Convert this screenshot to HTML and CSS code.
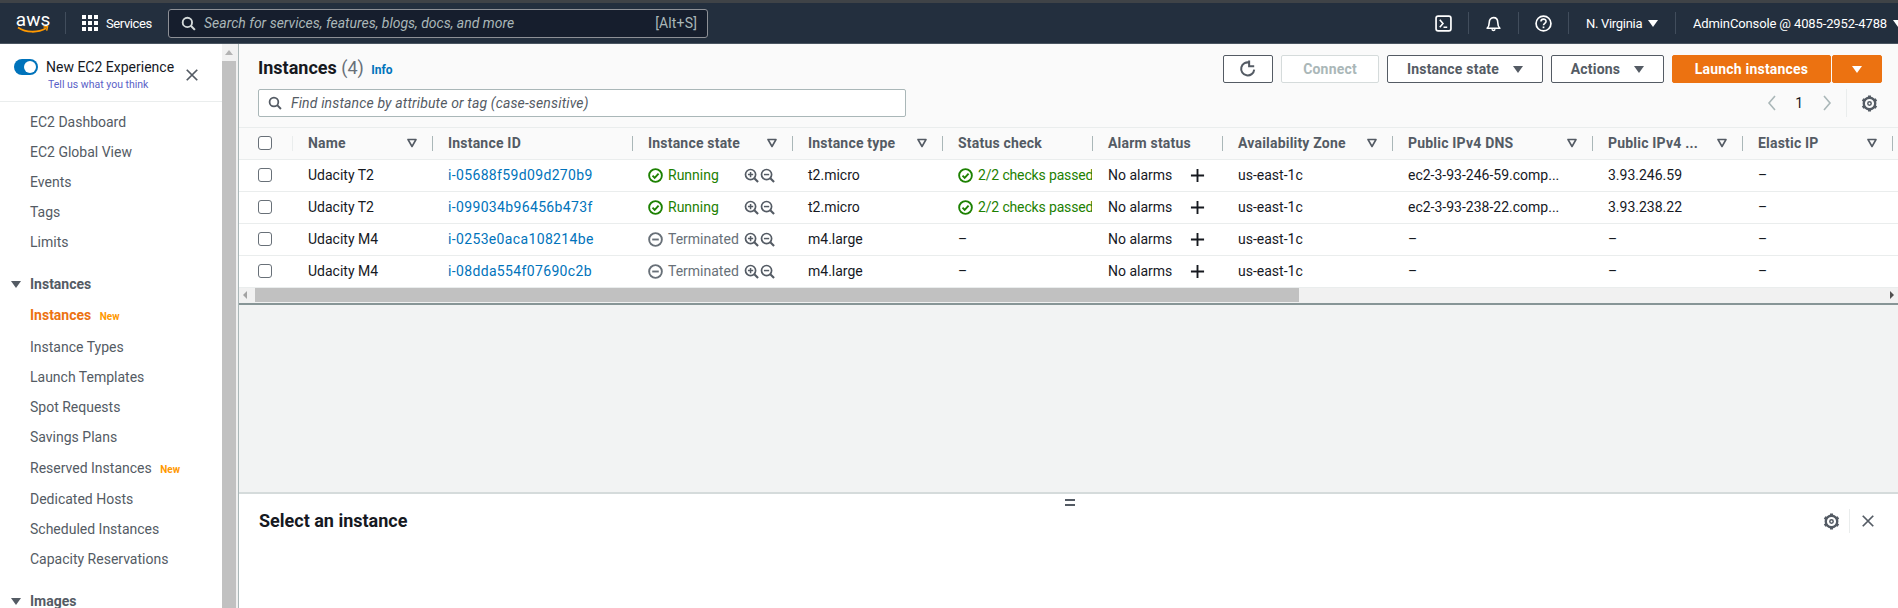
FILE: index.html
```html
<!DOCTYPE html>
<html lang="en">
<head>
  <meta charset="UTF-8">
  <title>Instances | EC2 Management Console</title>
  <link rel="stylesheet" href="styles.css">
</head>
<body>

<svg class="defs" width="0" height="0">
  <symbol id="gear" viewBox="0 0 16 16">
    <circle cx="8" cy="8" r="5.4" fill="none" stroke="currentColor" stroke-width="2.2"/>
    <circle cx="8" cy="8" r="1.6" fill="none" stroke="currentColor" stroke-width="1.4"/>
    <path d="M8 .5v2.500M8 13v2.500M1.500 4.200l2.200 1.300M12.300 10.500l2.200 1.300M1.500 11.800l2.200-1.300M12.300 5.500l2.200-1.300" stroke="currentColor" stroke-width="2.800"/>
  </symbol>
  <symbol id="funnel" viewBox="0 0 10 10">
    <path d="M1 1.5h8L5 8.5z" fill="none" stroke="currentColor" stroke-width="1.6" stroke-linejoin="round"/>
  </symbol>
  <symbol id="ok" viewBox="0 0 16 16">
    <circle cx="8" cy="8" r="6.8" fill="none" stroke="currentColor" stroke-width="2"/>
    <path d="M4.8 8.2l2.3 2.3 4.2-4.6" fill="none" stroke="currentColor" stroke-width="2"/>
  </symbol>
  <symbol id="stopped" viewBox="0 0 16 16">
    <circle cx="8" cy="8" r="6.8" fill="none" stroke="currentColor" stroke-width="2"/>
    <path d="M4.5 8h7" stroke="currentColor" stroke-width="2"/>
  </symbol>
  <symbol id="zoomin" viewBox="0 0 16 16">
    <circle cx="7" cy="7" r="5.4" fill="none" stroke="currentColor" stroke-width="1.8"/>
    <path d="M11 11l4 4" stroke="currentColor" stroke-width="2.2"/>
    <path d="M4.2 7h5.6M7 4.2v5.6" stroke="currentColor" stroke-width="1.6"/>
  </symbol>
  <symbol id="zoomout" viewBox="0 0 16 16">
    <circle cx="7" cy="7" r="5.4" fill="none" stroke="currentColor" stroke-width="1.8"/>
    <path d="M11 11l4 4" stroke="currentColor" stroke-width="2.2"/>
    <path d="M4.2 7h5.6" stroke="currentColor" stroke-width="1.6"/>
  </symbol>
  <symbol id="plus" viewBox="0 0 16 16">
    <path d="M8 1v14M1 8h14" stroke="currentColor" stroke-width="2"/>
  </symbol>
  <symbol id="cross" viewBox="0 0 16 16">
    <path d="M2 2l12 12M14 2L2 14" stroke="currentColor" stroke-width="2"/>
  </symbol>
  <symbol id="search" viewBox="0 0 16 16">
    <circle cx="6.8" cy="6.8" r="5" fill="none" stroke="currentColor" stroke-width="2"/>
    <path d="M10.5 10.5l4.3 4.3" stroke="currentColor" stroke-width="2.2"/>
  </symbol>
</svg>

<div class="topline"></div>

<header class="navbar">
  <div class="aws-logo">
    <span class="aws-word">aws</span>
    <svg class="aws-smile" viewBox="0 0 32 8" width="32" height="8">
      <path d="M1 1.5c8 5.500 20 5.500 28 .8" fill="none" stroke="#f90" stroke-width="1.8"/>
      <path d="M26.500 1l4-.4-.8 4" fill="none" stroke="#f90" stroke-width="1.5"/>
    </svg>
  </div>
  <span class="nav-sep nav-sep-logo"></span>
  <svg class="grid-icon" viewBox="0 0 16 16" width="16" height="16" fill="#fff">
    <rect width="4" height="4"/><rect x="6" width="4" height="4"/><rect x="12" width="4" height="4"/>
    <rect y="6" width="4" height="4"/><rect x="6" y="6" width="4" height="4"/><rect x="12" y="6" width="4" height="4"/>
    <rect y="12" width="4" height="4"/><rect x="6" y="12" width="4" height="4"/><rect x="12" y="12" width="4" height="4"/>
  </svg>
  <span class="services">Services</span>
  <div class="nav-search">
    <svg width="15" height="15"><use href="#search"/></svg>
    <span class="nav-search-text">Search for services, features, blogs, docs, and more</span>
    <span class="nav-search-key">[Alt+S]</span>
  </div>
  <div class="nav-right">
    <svg class="nav-icon" viewBox="0 0 16 16" width="17" height="17">
      <rect x="1" y="1" width="14" height="14" rx="2" fill="none" stroke="#fff" stroke-width="1.6"/>
      <path d="M4.5 4.5L7.5 8l-3 3.5M8 11.5h3.5" fill="none" stroke="#fff" stroke-width="1.5"/>
    </svg>
    <span class="nav-sep"></span>
    <svg class="nav-icon" viewBox="0 0 16 16" width="17" height="17">
      <path d="M2 12.5c1.500-1.500 2-2.500 2-5.500 0-2.600 1.600-4.500 4-4.500s4 1.900 4 4.500c0 3 .5 4 2 5.500z" fill="none" stroke="#fff" stroke-width="1.5" stroke-linejoin="round"/>
      <path d="M6.500 13.500a1.600 1.600 0 0 0 3 0" fill="none" stroke="#fff" stroke-width="1.5"/>
    </svg>
    <span class="nav-sep"></span>
    <svg class="nav-icon" viewBox="0 0 16 16" width="17" height="17">
      <circle cx="8" cy="8" r="7" fill="none" stroke="#fff" stroke-width="1.6"/>
      <path d="M5.600 6.200c0-3 4.800-3 4.800-.2 0 1.800-2.400 1.800-2.400 3.600" fill="none" stroke="#fff" stroke-width="1.5"/>
      <rect x="7.200" y="10.800" width="1.600" height="1.600" fill="#fff"/>
    </svg>
    <span class="nav-sep"></span>
    <span class="nav-menu nav-region">N. Virginia <i class="caret-white"></i></span>
    <span class="nav-sep"></span>
    <span class="nav-menu nav-account">AdminConsole @ 4085-2952-4788 <i class="caret-white"></i></span>
  </div>
</header>

<div class="content">
  <nav class="sidebar">
    <div class="experience">
      <div class="experience-row">
        <span class="toggle"><span class="toggle-knob"></span></span>
        <span class="experience-title">New EC2 Experience</span>
        <svg class="experience-close" width="14" height="14"><use href="#cross"/></svg>
      </div>
      <a class="experience-link">Tell us what you think</a>
    </div>
    <ul class="side-list side-list-top">
      <li>EC2 Dashboard</li>
      <li>EC2 Global View</li>
      <li>Events</li>
      <li>Tags</li>
      <li>Limits</li>
    </ul>
    <div class="side-head"><i class="caret-dark"></i>Instances</div>
    <ul class="side-list">
      <li class="side-new side-active">Instances <span class="new-tag">New</span></li>
      <li>Instance Types</li>
      <li>Launch Templates</li>
      <li>Spot Requests</li>
      <li>Savings Plans</li>
      <li class="side-new">Reserved Instances <span class="new-tag">New</span></li>
      <li>Dedicated Hosts</li>
      <li>Scheduled Instances</li>
      <li>Capacity Reservations</li>
    </ul>
    <div class="side-head"><i class="caret-dark"></i>Images</div>
  </nav>

  <div class="side-scroll">
    <div class="side-scroll-up"></div>
    <div class="side-scroll-thumb"></div>
  </div>

  <main class="main">
    <section class="toolbar">
      <div class="toolbar-left">
        <h1 class="title">Instances <span class="count">(4)</span> <a class="info">Info</a></h1>
        <div class="filter">
          <svg width="14" height="14"><use href="#search"/></svg>
          <span>Find instance by attribute or tag (case-sensitive)</span>
        </div>
      </div>
      <div class="toolbar-right">
        <div class="buttons">
          <button class="btn btn-refresh">
            <svg viewBox="0 0 16 16" width="18" height="18">
              <path d="M13.500 8.500A5.800 5.800 0 1 1 9.500 2.400" fill="none" stroke="currentColor" stroke-width="1.8"/>
              <path d="M9 .5v5h4.500" fill="none" stroke="currentColor" stroke-width="1.8"/>
            </svg>
          </button>
          <button class="btn btn-connect">Connect</button>
          <button class="btn btn-state">Instance state <i class="caret-dark caret-btn"></i></button>
          <button class="btn btn-actions">Actions <i class="caret-dark caret-btn"></i></button>
          <button class="btn btn-launch">Launch instances</button>
          <button class="btn btn-launch-more"><i class="caret-white caret-btn"></i></button>
        </div>
        <div class="pager">
          <svg class="pager-arrow" viewBox="0 0 10 16" width="10" height="16"><path d="M8 1L2 8l6 7" fill="none" stroke="currentColor" stroke-width="1.6"/></svg>
          <span class="pager-num">1</span>
          <svg class="pager-arrow" viewBox="0 0 10 16" width="10" height="16"><path d="M2 1l6 7-6 7" fill="none" stroke="currentColor" stroke-width="1.6"/></svg>
          <span class="pager-sep"></span>
          <svg class="gear" width="17" height="17"><use href="#gear"/></svg>
        </div>
      </div>
    </section>

    <div class="table-wrap">
      <table class="instances">
        <colgroup>
          <col class="c-check"><col class="c-name"><col class="c-id"><col class="c-state"><col class="c-type">
          <col class="c-status"><col class="c-alarm"><col class="c-zone"><col class="c-dns"><col class="c-ip">
          <col class="c-elastic"><col class="c-rest">
        </colgroup>
        <thead>
          <tr>
            <th><div class="head-check"><span class="check"></span></div></th>
            <th><div class="head-cell head-first"><span>Name</span><svg width="10" height="10"><use href="#funnel"/></svg></div></th>
            <th><div class="head-cell"><span>Instance ID</span></div></th>
            <th><div class="head-cell"><span>Instance state</span><svg width="10" height="10"><use href="#funnel"/></svg></div></th>
            <th><div class="head-cell"><span>Instance type</span><svg width="10" height="10"><use href="#funnel"/></svg></div></th>
            <th><div class="head-cell"><span>Status check</span></div></th>
            <th><div class="head-cell"><span>Alarm status</span></div></th>
            <th><div class="head-cell"><span>Availability Zone</span><svg width="10" height="10"><use href="#funnel"/></svg></div></th>
            <th><div class="head-cell"><span>Public IPv4 DNS</span><svg width="10" height="10"><use href="#funnel"/></svg></div></th>
            <th><div class="head-cell"><span>Public IPv4 ...</span><svg width="10" height="10"><use href="#funnel"/></svg></div></th>
            <th><div class="head-cell"><span>Elastic IP</span><svg width="10" height="10"><use href="#funnel"/></svg></div></th>
            <th><div class="head-cell"></div></th>
          </tr>
        </thead>
        <tbody>
          <tr>
            <td class="td-check"><span class="check"></span></td>
            <td>Udacity T2</td>
            <td><a class="link">i-05688f59d09d270b9</a></td>
            <td><div class="state running"><svg width="15" height="15"><use href="#ok"/></svg><span class="state-label">Running</span><svg class="mag" width="15" height="15"><use href="#zoomin"/></svg><svg class="mag" width="15" height="15"><use href="#zoomout"/></svg></div></td>
            <td>t2.micro</td>
            <td><div class="status"><svg width="15" height="15"><use href="#ok"/></svg><span>2/2 checks passed</span></div></td>
            <td><div class="alarm"><span>No alarms</span><svg width="15" height="15"><use href="#plus"/></svg></div></td>
            <td>us-east-1c</td>
            <td>ec2-3-93-246-59.comp...</td>
            <td>3.93.246.59</td>
            <td>–</td>
            <td></td>
          </tr>
          <tr>
            <td class="td-check"><span class="check"></span></td>
            <td>Udacity T2</td>
            <td><a class="link">i-099034b96456b473f</a></td>
            <td><div class="state running"><svg width="15" height="15"><use href="#ok"/></svg><span class="state-label">Running</span><svg class="mag" width="15" height="15"><use href="#zoomin"/></svg><svg class="mag" width="15" height="15"><use href="#zoomout"/></svg></div></td>
            <td>t2.micro</td>
            <td><div class="status"><svg width="15" height="15"><use href="#ok"/></svg><span>2/2 checks passed</span></div></td>
            <td><div class="alarm"><span>No alarms</span><svg width="15" height="15"><use href="#plus"/></svg></div></td>
            <td>us-east-1c</td>
            <td>ec2-3-93-238-22.comp...</td>
            <td>3.93.238.22</td>
            <td>–</td>
            <td></td>
          </tr>
          <tr>
            <td class="td-check"><span class="check"></span></td>
            <td>Udacity M4</td>
            <td><a class="link">i-0253e0aca108214be</a></td>
            <td><div class="state terminated"><svg width="15" height="15"><use href="#stopped"/></svg><span class="state-label">Terminated</span><svg class="mag" width="15" height="15"><use href="#zoomin"/></svg><svg class="mag" width="15" height="15"><use href="#zoomout"/></svg></div></td>
            <td>m4.large</td>
            <td>–</td>
            <td><div class="alarm"><span>No alarms</span><svg width="15" height="15"><use href="#plus"/></svg></div></td>
            <td>us-east-1c</td>
            <td>–</td>
            <td>–</td>
            <td>–</td>
            <td></td>
          </tr>
          <tr>
            <td class="td-check"><span class="check"></span></td>
            <td>Udacity M4</td>
            <td><a class="link">i-08dda554f07690c2b</a></td>
            <td><div class="state terminated"><svg width="15" height="15"><use href="#stopped"/></svg><span class="state-label">Terminated</span><svg class="mag" width="15" height="15"><use href="#zoomin"/></svg><svg class="mag" width="15" height="15"><use href="#zoomout"/></svg></div></td>
            <td>m4.large</td>
            <td>–</td>
            <td><div class="alarm"><span>No alarms</span><svg width="15" height="15"><use href="#plus"/></svg></div></td>
            <td>us-east-1c</td>
            <td>–</td>
            <td>–</td>
            <td>–</td>
            <td></td>
          </tr>
        </tbody>
      </table>
    </div>

    <div class="table-scroll">
      <i class="arrow-left"></i>
      <div class="table-thumb"></div>
      <i class="arrow-right"></i>
    </div>

    <div class="empty-area"></div>

    <section class="details">
      <div class="drag-handle"></div>
      <div class="details-row">
        <h2 class="details-title">Select an instance</h2>
        <div class="details-tools">
          <svg class="gear" width="17" height="17"><use href="#gear"/></svg>
          <span class="pager-sep details-sep"></span>
          <svg class="details-close" width="14" height="14"><use href="#cross"/></svg>
        </div>
      </div>
    </section>
  </main>
</div>

</body>
</html>
```

FILE: styles.css
```css
* {
  box-sizing: border-box;
}
html, body {
  margin: 0;
  height: 608px;
  overflow: hidden;
}
body {
  font-family: Roboto, "Noto Sans", Arial, sans-serif;
  font-size: 14px;
  color: #16191f;
  background-color: #fff;
  display: flex;
  flex-direction: column;
}
.defs {
  position: absolute;
}
h1, h2, ul {
  margin: 0;
  padding: 0;
}

/* top bar */
.topline {
  height: 3px;
  background-color: #3f4347;
  flex: none;
}
.navbar {
  height: 41px;
  flex: none;
  background-color: #232f3e;
  border-bottom: 1px solid #4a5561;
  color: #fff;
  display: flex;
  align-items: center;
  padding-left: 17px;
}
.aws-logo {
  width: 32px;
  display: flex;
  flex-direction: column;
  align-items: center;
}
.aws-word {
  font-size: 19px;
  line-height: 15px;
}
.aws-smile {
  margin-top: -1px;
}
.nav-sep {
  width: 1px;
  height: 22px;
  background-color: #414d5c;
}
.nav-sep-logo {
  margin-left: 16px;
}
.grid-icon {
  margin-left: 16px;
}
.services {
  margin-left: 8px;
  font-size: 13px;
  letter-spacing: -0.4px;
  width: 62px;
}
.nav-search {
  width: 540px;
  height: 29px;
  background-color: #161e2d;
  border: 1px solid #8d9096;
  border-radius: 3px;
  display: flex;
  align-items: center;
  padding: 0 10px 0 12px;
  color: #d5dbdb;
}
.nav-search-text {
  margin-left: 8px;
  font-style: italic;
  color: #aab7b8;
  flex: 1;
}
.nav-search-key {
  color: #aab7b8;
  letter-spacing: 0.15px;
}
.nav-right {
  margin-left: auto;
  display: flex;
  align-items: center;
}
.nav-icon {
  margin: 0 16px;
}
.nav-menu {
  font-size: 13px;
  white-space: nowrap;
}
.nav-region {
  margin: 0 17px;
  width: 72px;
  letter-spacing: -0.3px;
}
.nav-account {
  margin-left: 17px;
  width: 205px;
  overflow: hidden;
  letter-spacing: -0.13px;
}
.caret-white, .caret-dark {
  display: inline-block;
  width: 0;
  height: 0;
  border-left: 5px solid transparent;
  border-right: 5px solid transparent;
  border-top: 7px solid #fff;
  margin-left: 3px;
  vertical-align: 1px;
}
.caret-dark {
  border-top-color: #545b64;
}

/* sidebar */
.content {
  flex: 1;
  display: flex;
  min-height: 0;
}
.sidebar {
  width: 222px;
  flex: none;
  overflow: hidden;
  color: #545b64;
}
.experience {
  height: 58px;
  border-bottom: 1px solid #eaeded;
  padding: 14px 0 0 14px;
}
.experience-row {
  display: flex;
  align-items: center;
  height: 18px;
}
.toggle {
  width: 24px;
  height: 16px;
  border-radius: 8px;
  background-color: #0073bb;
  display: flex;
  justify-content: flex-end;
  align-items: center;
  padding-right: 2px;
}
.toggle-knob {
  width: 12px;
  height: 12px;
  border-radius: 50%;
  background-color: #fff;
}
.experience-title {
  margin-left: 8px;
  color: #16191f;
  white-space: nowrap;
}
.experience-close {
  margin: 16px 0 0 11px;
  color: #545b64;
  flex: none;
}
.experience-link {
  display: block;
  margin: 1px 0 0 34px;
  font-size: 10.5px;
  color: #5a5fc7;
  line-height: 16px;
}
.side-list {
  list-style: none;
}
.side-list-top {
  padding-top: 5px;
}
.side-list li {
  height: 30px;
  line-height: 30px;
  padding-left: 30px;
}
.side-list li.side-new {
  height: 32px;
  line-height: 32px;
}
.side-list li.side-active {
  height: 33px;
}
.side-active {
  color: #ec7211;
  font-weight: 700;
}
.new-tag {
  color: #ff9900;
  font-size: 10px;
  font-weight: 700;
  margin-left: 5px;
}
.side-head {
  height: 30px;
  line-height: 30px;
  margin-top: 12px;
  padding-left: 11px;
  font-weight: 700;
}
.side-head .caret-dark {
  margin: 0 9px 0 0;
  vertical-align: 1px;
}
.side-scroll {
  width: 17px;
  flex: none;
  background-color: #f1f1f1;
  border-right: 1px solid #aab7b8;
  display: flex;
  flex-direction: column;
  padding: 0 2px 0 0;
}
.side-scroll-up {
  width: 0;
  height: 0;
  margin: 6px auto 6px;
  border-left: 4px solid transparent;
  border-right: 4px solid transparent;
  border-bottom: 5px solid #b3b3b3;
}
.side-scroll-thumb {
  flex: 1;
  background-color: #c1c1c1;
}

/* main column */
.main {
  flex: 1;
  min-width: 0;
  display: flex;
  flex-direction: column;
  background-color: #f2f3f3;
}
.toolbar {
  height: 84px;
  flex: none;
  background-color: #fafafa;
  border-bottom: 1px solid #eaeded;
  display: flex;
  justify-content: space-between;
  padding: 11px 16px 0 19px;
}
.toolbar-left {
  margin-top: -1px;
}
.title {
  font-size: 18px;
  font-weight: 700;
  line-height: 28px;
  height: 28px;
}
.count {
  font-weight: 400;
  color: #687078;
}
.info {
  font-size: 12px;
  color: #0073bb;
  margin-left: 3px;
}
.filter {
  margin-top: 7px;
  width: 648px;
  height: 28px;
  background-color: #fff;
  border: 1px solid #aab7b8;
  border-radius: 2px;
  display: flex;
  align-items: center;
  padding-left: 9px;
  color: #545b64;
  font-style: italic;
  letter-spacing: 0.15px;
}
.filter span {
  margin-left: 9px;
}
.toolbar-right {
  display: flex;
  flex-direction: column;
  align-items: flex-end;
}
.buttons {
  display: flex;
}
.btn {
  font-family: inherit;
  font-size: 14px;
  font-weight: 700;
  letter-spacing: 0.2px;
  height: 28px;
  background-color: #fff;
  color: #545b64;
  border: 1px solid #545b64;
  border-radius: 2px;
  margin-left: 8px;
  padding: 0;
  display: flex;
  align-items: center;
  justify-content: center;
}
.btn-refresh {
  width: 50px;
}
.btn-connect {
  width: 98px;
  color: #aab7b8;
  border-color: #d5dbdb;
}
.btn-state {
  width: 156px;
}
.btn-actions {
  width: 113px;
}
.caret-btn {
  margin-left: 14px;
  vertical-align: 0;
}
.btn-launch {
  width: 159px;
  background-color: #ec7211;
  border-color: #ec7211;
  color: #fff;
}
.btn-launch-more {
  width: 50px;
  margin-left: 1px;
  background-color: #ec7211;
  border-color: #ec7211;
}
.btn-launch-more .caret-btn {
  margin: 0;
}
.pager {
  margin-top: 6px;
  margin-right: 4px;
  height: 28px;
  display: flex;
  align-items: center;
}
.pager-arrow {
  color: #aab7b8;
}
.pager-num {
  margin: 0 19px 0 18px;
}
.pager-sep {
  width: 1px;
  height: 28px;
  background-color: #eaeded;
  margin: 0 14px 0 14px;
}
.gear {
  color: #545b64;
}

/* table */
.table-wrap {
  flex: none;
  overflow: hidden;
  background-color: #fff;
}
.instances {
  table-layout: fixed;
  border-collapse: collapse;
  width: 1700px;
}
.c-check { width: 53px; }
.c-name { width: 140px; }
.c-id { width: 200px; }
.c-state { width: 160px; }
.c-type { width: 150px; }
.c-status { width: 150px; }
.c-alarm { width: 130px; }
.c-zone { width: 170px; }
.c-dns { width: 200px; }
.c-ip { width: 150px; }
.c-elastic { width: 150px; }
.c-rest { width: 47px; }
.instances th {
  height: 31px;
  padding: 0;
  background-color: #fafafa;
  border-bottom: 1px solid #eaeded;
  font-size: 14px;
  font-weight: 700;
  letter-spacing: 0.2px;
  color: #545b64;
  text-align: left;
}
.head-check {
  padding-left: 19px;
  display: flex;
  align-items: center;
}
.head-cell {
  height: 15px;
  border-left: 1px solid #aab7b8;
  padding: 0 15px 0 15px;
  display: flex;
  align-items: center;
  justify-content: space-between;
  white-space: nowrap;
}
.head-first {
  border-left-color: #eaeded;
}
.head-cell svg {
  color: #545b64;
  flex: none;
}
.instances td {
  height: 32px;
  padding: 0 0 0 16px;
  border-bottom: 1px solid #eaeded;
  white-space: nowrap;
  overflow: hidden;
}
.instances td.td-check {
  padding-left: 19px;
  font-size: 0;
}
.check {
  display: inline-block;
  flex: none;
  width: 14px;
  height: 14px;
  background-color: #fff;
  border: 1px solid #687078;
  border-radius: 3px;
}
.link {
  color: #0073bb;
  letter-spacing: 0.35px;
}
.state, .status, .alarm {
  display: flex;
  align-items: center;
}
.state svg, .status svg {
  flex: none;
}
.state-label {
  width: 75px;
  margin-left: 5px;
}
.running, .status {
  color: #1d8102;
}
.status span {
  margin-left: 5px;
  letter-spacing: -0.15px;
}
.terminated {
  color: #687078;
}
.mag {
  color: #545b64;
  margin-left: 1px;
}
.alarm span {
  width: 82px;
}
.alarm svg {
  color: #16191f;
}
.table-scroll {
  height: 17px;
  flex: none;
  background-color: #f1f1f1;
  border-bottom: 2px solid #879596;
  display: flex;
  align-items: center;
}
.arrow-left, .arrow-right {
  width: 0;
  height: 0;
  border-top: 4px solid transparent;
  border-bottom: 4px solid transparent;
}
.arrow-left {
  margin-left: 4px;
  border-right: 4px solid #a3a3a3;
}
.arrow-right {
  margin-left: auto;
  margin-right: 4px;
  border-left: 4px solid #505050;
}
.table-thumb {
  margin-left: 8px;
  width: 1044px;
  height: 14px;
  background-color: #c1c1c1;
}
.empty-area {
  flex: 1;
}

/* split panel */
.details {
  height: 116px;
  flex: none;
  background-color: #fff;
  border-top: 2px solid #d5dbdb;
}
.drag-handle {
  width: 10px;
  height: 7px;
  margin: 5px 0 0 826px;
  border-top: 2px solid #545b64;
  border-bottom: 2px solid #545b64;
}
.details-row {
  display: flex;
  justify-content: space-between;
  align-items: center;
  padding: 3px 23px 0 20px;
}
.details-title {
  font-size: 18px;
  font-weight: 700;
  line-height: 24px;
}
.details-tools {
  display: flex;
  align-items: center;
}
.details-sep {
  height: 24px;
  margin: 0 11px 0 9px;
}
.details-close {
  color: #545b64;
}
```
